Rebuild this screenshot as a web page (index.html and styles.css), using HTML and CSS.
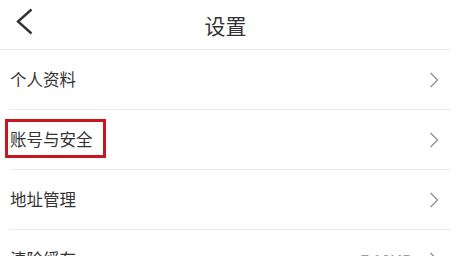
FILE: index.html
```html
<!DOCTYPE html>
<html lang="zh-CN">
<head>
<meta charset="utf-8">
<title>设置</title>
<link rel="stylesheet" href="styles.css">
</head>
<body>
<div class="screen">
  <header class="topbar">
    <span class="back">
      <svg width="18" height="28" viewBox="0 0 18 28"><polyline points="15.5,1.5 2,13.5 15.5,25.5" fill="none" stroke="#333" stroke-width="2.4" stroke-linejoin="miter"/></svg>
    </span>
    <h1 class="title">设置</h1>
  </header>
  <ul class="list">
    <li class="row"><span class="label">个人资料</span><span class="arrow"><svg width="10" height="16" viewBox="0 0 10 16"><polyline points="1.5,1 8.5,8 1.5,15" fill="none" stroke="#999" stroke-width="1.5"/></svg></span></li>
    <li class="row"><span class="label">账号与安全</span><span class="arrow"><svg width="10" height="16" viewBox="0 0 10 16"><polyline points="1.5,1 8.5,8 1.5,15" fill="none" stroke="#999" stroke-width="1.5"/></svg></span><span class="mark"></span></li>
    <li class="row"><span class="label">地址管理</span><span class="arrow"><svg width="10" height="16" viewBox="0 0 10 16"><polyline points="1.5,1 8.5,8 1.5,15" fill="none" stroke="#999" stroke-width="1.5"/></svg></span></li>
    <li class="row"><span class="label">清除缓存</span><span class="value">7.10MB</span><span class="arrow"><svg width="10" height="16" viewBox="0 0 10 16"><polyline points="1.5,1 8.5,8 1.5,15" fill="none" stroke="#999" stroke-width="1.5"/></svg></span></li>
  </ul>
</div>
</body>
</html>
```
FILE: styles.css
```css
* { box-sizing: border-box; }
html, body { margin: 0; padding: 0; background: #fff; }
body {
  font-family: "Noto Sans CJK SC", "Noto Sans", sans-serif;
  color: #333;
  overflow: hidden;
}
.screen { width: 451px; }
.topbar {
  position: relative;
  height: 50px;
  border-bottom: 1px solid #ebebeb;
  display: flex;
  align-items: center;
  justify-content: center;
}
.back {
  position: absolute;
  left: 16px;
  top: 8px;
  display: flex;
}
.title {
  margin: 0;
  font-size: 21px;
  font-weight: normal;
  color: #333;
  line-height: 1;
  padding-top: 1px;
}
.list { list-style: none; margin: 0; padding: 0 0 0 10px; }
.row {
  position: relative;
  height: 60px;
  border-bottom: 1px solid #ebebeb;
  display: flex;
  align-items: center;
  padding-right: 12px;
}
.label { flex: 1; font-size: 16.5px; color: #333; line-height: 1; }
.value { font-size: 15px; color: #999; margin-right: 17px; line-height: 1; }
.arrow { display: flex; }
.mark {
  position: absolute;
  left: -5px;
  top: 9px;
  width: 101px;
  height: 39px;
  border: 3px solid #c7161e;
}
```
